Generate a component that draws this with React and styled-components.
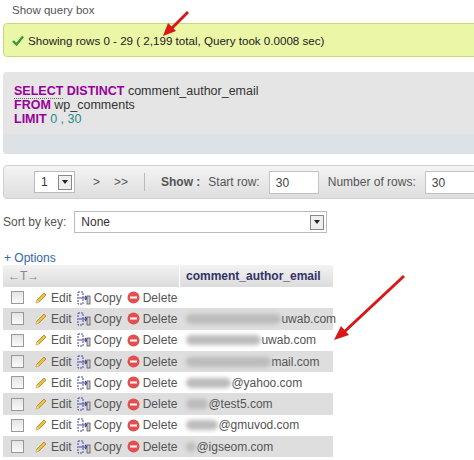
import styled, { createGlobalStyle } from "styled-components";

const Global = createGlobalStyle`
  body { margin: 0; background: #fff; font-family: "Liberation Sans", Arial, sans-serif; font-size: 12px; color: #333; overflow: hidden; }
`;

const Page = styled.div`
  position: relative;
  width: 474px;
  height: 460px;
  overflow: hidden;
`;
const TopLink = styled.div`
  color: #555;
  padding: 4px 0 0 12px;
  height: 19px;
  font-size: 11.5px;
`;
const Success = styled.div`
  margin-left: 3px;
  width: 490px;
  height: 34px;
  border: 1px solid #c8d87a;
  border-radius: 4px;
  background: #ebf6a6;
  display: flex;
  align-items: center;
  gap: 4px;
  padding-left: 8px;
  box-sizing: border-box;
  font-size: 11.6px;
  color: #222;
`;
const QueryBox = styled.div`
  margin: 15px 0 0 3px;
  width: 490px;
  height: 82px;
  border-radius: 4px;
  background: #e5e5e5;
  display: flex;
  flex-direction: column;
  overflow: hidden;
`;
const Sql = styled.div`
  flex: 1;
  padding: 12px 0 0 11px;
  font-size: 12.5px;
  line-height: 14px;
  color: #333;
`;
const Kw = styled.span`
  color: #990099;
  font-weight: bold;
  ${(p) => p.$dotted && "border-bottom: 1px dotted #666;"}
`;
const Num = styled.span`color: #2b8a8a;`;
const Band = styled.div`
  height: 20px;
  background: #dce2e6;
`;
const Nav = styled.div`
  margin: 11px 0 0 3px;
  width: 490px;
  height: 34px;
  border-radius: 4px;
  background: linear-gradient(#f4f4f4, #dedede);
  border: 1px solid #d2d2d2;
  box-sizing: border-box;
  display: flex;
  align-items: center;
  padding-left: 30px;
  color: #555;
  font-size: 12px;
`;
const Select = styled.div`
  width: ${(p) => p.$w}px;
  height: 22px;
  background: #fff;
  border: 1px solid #bbb;
  box-sizing: border-box;
  display: flex;
  align-items: center;
  justify-content: space-between;
  padding: 0 2px 0 6px;
  font-size: 12px;
  color: #333;
`;
const Arrow = styled.div`
  width: 12px;
  height: 13px;
  border: 1px solid #888;
  background: #eee;
  display: flex;
  align-items: center;
  justify-content: center;
  &:after { content: ""; border: 3px solid transparent; border-top: 4px solid #222; margin-top: 3px; }
`;
const Input = styled.div`
  width: 50px;
  height: 23px;
  background: #fff;
  border: 1px solid #c4c4c4;
  box-sizing: border-box;
  padding: 4px 0 0 6px;
  color: #444;
  margin-left: ${(p) => p.$ml || 0}px;
`;
const Sep = styled.div`
  width: 1px;
  height: 18px;
  background: #bbb;
  margin: 0 16px 0 16px;
`;
const SortRow = styled.div`
  margin-top: 12px;
  display: flex;
  align-items: center;
  gap: 8px;
  color: #555;
  font-size: 12px;
`;
const Options = styled.div`
  margin: 18px 0 0 4px;
  color: #3366aa;
  font-size: 12px;
`;
const Table = styled.div`
  margin-left: 3px;
  width: 330px;
  font-size: 12px;
`;
const Head = styled.div`
  display: grid;
  grid-template-columns: 176px 1fr;
  height: 22px;
  background: linear-gradient(#f2f2f2, #dcdcdc);
  div { display: flex; align-items: center; }
`;
const HeadCol = styled.div`
  font-weight: bold;
  color: #336;
  padding-left: 6px;
  border-left: 1px solid #fff;
`;
const Row = styled.div`
  display: flex;
  align-items: center;
  height: 21.3px;
  white-space: nowrap;
  background: ${(p) => (p.$odd ? "#dedede" : "#fff")};
  color: #555;
  & > * { flex-shrink: 0; }
`;
const Check = styled.div`
  width: 11px;
  height: 11px;
  border: 1px solid #999;
  background: linear-gradient(#e4e4e4, #fafafa);
  margin: 0 10px 0 8px;
`;
const Act = styled.span`
  margin: 0 5px 0 3px;
`;
const Blur = styled.span`
  display: inline-block;
  width: ${(p) => p.$w}px;
  height: 10px;
  background: #bbb;
  border-radius: 5px;
  filter: blur(2px);
  margin-left: 4px;
`;
const Overlay = styled.svg`
  position: absolute;
  left: 0;
  top: 0;
  pointer-events: none;
`;

const Pencil = () => (
  <svg width="14" height="14" viewBox="0 0 14 14">
    <path d="M2 12 L3 9 L10 2 L12 4 L5 11 Z" fill="#f0c040" stroke="#b08020" strokeWidth="0.8" />
    <path d="M2 12 L3 9 L5 11 Z" fill="#f5deb3" />
  </svg>
);
const CopyIcon = () => (
  <svg width="14" height="14" viewBox="0 0 14 14">
    <rect x="1" y="1" width="5" height="12" fill="none" stroke="#4444aa" strokeWidth="1" strokeDasharray="2 1" />
    <path d="M2 7 H10 M8 5 L10 7 L8 9" stroke="#4444aa" strokeWidth="1.2" fill="none" />
    <rect x="10" y="5" width="3" height="8" fill="#ccc" stroke="#555" strokeWidth="0.8" />
  </svg>
);
const DelIcon = () => (
  <svg width="13" height="13" viewBox="0 0 13 13">
    <circle cx="6.5" cy="6.5" r="6" fill="#e05050" />
    <rect x="3" y="5.5" width="7" height="2" fill="#fff" />
  </svg>
);

const rows = [
  [0, ""],
  [95, "uwab.com"],
  [75, "uwab.com"],
  [85, "mail.com"],
  [45, "@yahoo.com"],
  [22, "@test5.com"],
  [32, "@gmuvod.com"],
  [10, "@igseom.com"],
  [40, "@freeb"],
];

export default function App() {
  return (
    <Page>
      <Global />
      <TopLink>Show query box</TopLink>
      <Success>
        <svg width="12" height="11" viewBox="0 0 12 11">
          <path d="M1 6 L4.5 9.5 L11 1.5" stroke="#3a9a3a" strokeWidth="2.4" fill="none" />
        </svg>
        Showing rows 0 - 29 ( 2,199 total, Query took 0.0008 sec)
      </Success>
      <QueryBox>
        <Sql>
          <Kw $dotted>SELECT</Kw> <Kw>DISTINCT</Kw> comment_author_email
          <br />
          <Kw>FROM</Kw> wp_comments
          <br />
          <Kw>LIMIT</Kw> <Num>0 , 30</Num>
        </Sql>
        <Band />
      </QueryBox>
      <Nav>
        <Select $w={41}>1<Arrow /></Select>
        <span style={{ marginLeft: 18 }}>&gt;</span>
        <span style={{ marginLeft: 14 }}>&gt;&gt;</span>
        <Sep />
        <b>Show :</b>
        <span style={{ marginLeft: 8 }}>Start row:</span>
        <Input $ml={9}>30</Input>
        <span style={{ marginLeft: 9 }}>Number of rows:</span>
        <Input $ml={9}>30</Input>
      </Nav>
      <SortRow>
        <span style={{ marginLeft: 3 }}>Sort by key:</span>
        <Select $w={253}>None<Arrow /></Select>
      </SortRow>
      <Options>+ Options</Options>
      <Table>
        <Head>
          <div style={{ paddingLeft: 5, color: "#888" }}>←T→</div>
          <HeadCol>comment_author_email</HeadCol>
        </Head>
        {rows.map(([w, mail], i) => (
          <Row key={i} $odd={i % 2 === 1}>
            <Check />
            <Pencil />
            <Act>Edit</Act>
            <CopyIcon />
            <Act>Copy</Act>
            <DelIcon />
            <Act>Delete</Act>
            {w > 0 && <Blur $w={w} />}
            {mail}
          </Row>
        ))}
      </Table>
      <Overlay width="474" height="460">
        <path d="M188 12 L172 28" stroke="#d81818" strokeWidth="3" />
        <path d="M163 36 L176 31 L168 23 Z" fill="#d81818" />
        <path d="M404 276 L343 333" stroke="#d81818" strokeWidth="3" />
        <path d="M334 340 L349 335 L341 326 Z" fill="#d81818" />
      </Overlay>
    </Page>
  );
}
